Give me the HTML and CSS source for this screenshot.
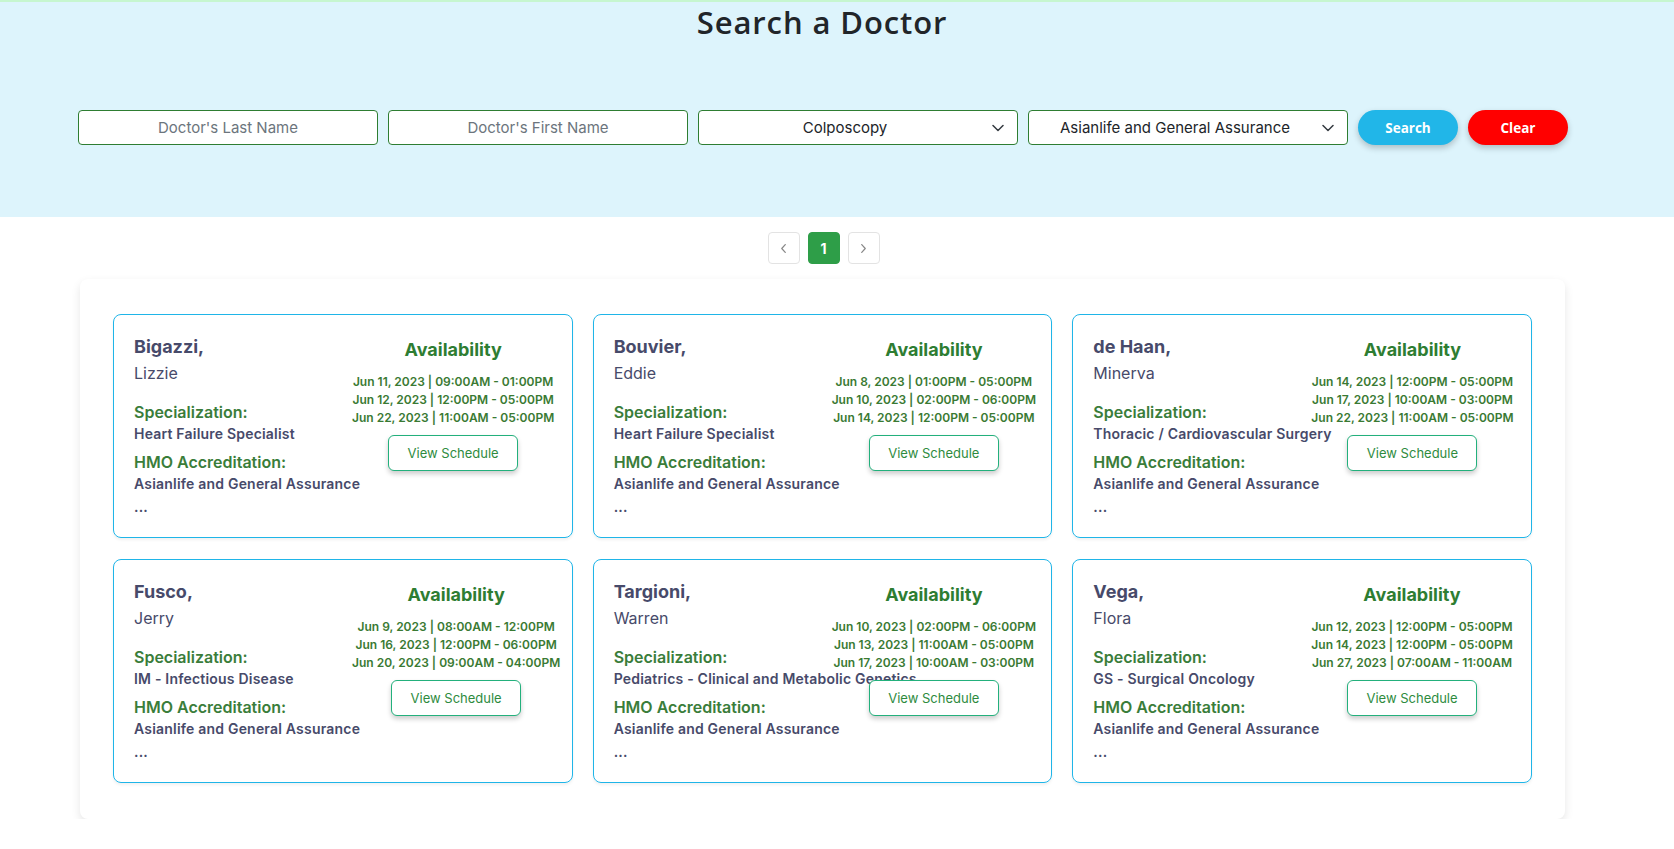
FILE: index.html
```html
<!DOCTYPE html>
<html lang="en">
<head>
<meta charset="utf-8">
<title>Search a Doctor</title>
<link rel="stylesheet" href="styles.css">
</head>
<body>
<header class="hero">
  <h1 class="hero-title">Search a Doctor</h1>
  <form class="search-row">
    <input class="field" type="text" placeholder="Doctor's Last Name">
    <input class="field" type="text" placeholder="Doctor's First Name">
    <div class="select-wrap wide">
      <select class="field select"><option>Colposcopy</option></select>
      <svg class="chev" viewBox="0 0 12 8" width="12" height="8"><path d="M1 1.5l5 5 5-5" fill="none" stroke="#343a40" stroke-width="1.5" stroke-linecap="round" stroke-linejoin="round"/></svg>
    </div>
    <div class="select-wrap wide">
      <select class="field select"><option>Asianlife and General Assurance</option></select>
      <svg class="chev" viewBox="0 0 12 8" width="12" height="8"><path d="M1 1.5l5 5 5-5" fill="none" stroke="#343a40" stroke-width="1.5" stroke-linecap="round" stroke-linejoin="round"/></svg>
    </div>
    <button type="button" class="pill pill-search">Search</button>
    <button type="button" class="pill pill-clear">Clear</button>
  </form>
</header>

<nav class="pager">
  <span class="page-btn"><svg viewBox="0 0 8 12" width="7" height="11"><path d="M6 1.5L2 6l4 4.5" fill="none" stroke="#888" stroke-width="1.4" stroke-linecap="round" stroke-linejoin="round"/></svg></span>
  <span class="page-btn active">1</span>
  <span class="page-btn"><svg viewBox="0 0 8 12" width="7" height="11"><path d="M2 1.5L6 6l-4 4.5" fill="none" stroke="#888" stroke-width="1.4" stroke-linecap="round" stroke-linejoin="round"/></svg></span>
</nav>

<main class="results">
  <div class="card">
    <div class="info">
      <div class="last">Bigazzi,</div>
      <div class="first">Lizzie</div>
      <div class="label">Specialization:</div>
      <div class="value">Heart Failure Specialist</div>
      <div class="label label2">HMO Accreditation:</div>
      <div class="value">Asianlife and General Assurance</div>
      <div class="value more">...</div>
    </div>
    <div class="avail">
      <div class="avail-title">Availability</div>
      <div class="dates">
        <div>Jun 11, 2023 | 09:00AM - 01:00PM</div>
        <div>Jun 12, 2023 | 12:00PM - 05:00PM</div>
        <div>Jun 22, 2023 | 11:00AM - 05:00PM</div>
      </div>
      <button type="button" class="view-btn">View Schedule</button>
    </div>
  </div>

  <div class="card">
    <div class="info">
      <div class="last">Bouvier,</div>
      <div class="first">Eddie</div>
      <div class="label">Specialization:</div>
      <div class="value">Heart Failure Specialist</div>
      <div class="label label2">HMO Accreditation:</div>
      <div class="value">Asianlife and General Assurance</div>
      <div class="value more">...</div>
    </div>
    <div class="avail">
      <div class="avail-title">Availability</div>
      <div class="dates">
        <div>Jun 8, 2023 | 01:00PM - 05:00PM</div>
        <div>Jun 10, 2023 | 02:00PM - 06:00PM</div>
        <div>Jun 14, 2023 | 12:00PM - 05:00PM</div>
      </div>
      <button type="button" class="view-btn">View Schedule</button>
    </div>
  </div>

  <div class="card">
    <div class="info">
      <div class="last">de Haan,</div>
      <div class="first">Minerva</div>
      <div class="label">Specialization:</div>
      <div class="value">Thoracic / Cardiovascular Surgery</div>
      <div class="label label2">HMO Accreditation:</div>
      <div class="value">Asianlife and General Assurance</div>
      <div class="value more">...</div>
    </div>
    <div class="avail">
      <div class="avail-title">Availability</div>
      <div class="dates">
        <div>Jun 14, 2023 | 12:00PM - 05:00PM</div>
        <div>Jun 17, 2023 | 10:00AM - 03:00PM</div>
        <div>Jun 22, 2023 | 11:00AM - 05:00PM</div>
      </div>
      <button type="button" class="view-btn">View Schedule</button>
    </div>
  </div>

  <div class="card">
    <div class="info">
      <div class="last">Fusco,</div>
      <div class="first">Jerry</div>
      <div class="label">Specialization:</div>
      <div class="value">IM - Infectious Disease</div>
      <div class="label label2">HMO Accreditation:</div>
      <div class="value">Asianlife and General Assurance</div>
      <div class="value more">...</div>
    </div>
    <div class="avail">
      <div class="avail-title">Availability</div>
      <div class="dates">
        <div>Jun 9, 2023 | 08:00AM - 12:00PM</div>
        <div>Jun 16, 2023 | 12:00PM - 06:00PM</div>
        <div>Jun 20, 2023 | 09:00AM - 04:00PM</div>
      </div>
      <button type="button" class="view-btn">View Schedule</button>
    </div>
  </div>

  <div class="card">
    <div class="info">
      <div class="last">Targioni,</div>
      <div class="first">Warren</div>
      <div class="label">Specialization:</div>
      <div class="value">Pediatrics - Clinical and Metabolic Genetics</div>
      <div class="label label2">HMO Accreditation:</div>
      <div class="value">Asianlife and General Assurance</div>
      <div class="value more">...</div>
    </div>
    <div class="avail">
      <div class="avail-title">Availability</div>
      <div class="dates">
        <div>Jun 10, 2023 | 02:00PM - 06:00PM</div>
        <div>Jun 13, 2023 | 11:00AM - 05:00PM</div>
        <div>Jun 17, 2023 | 10:00AM - 03:00PM</div>
      </div>
      <button type="button" class="view-btn">View Schedule</button>
    </div>
  </div>

  <div class="card">
    <div class="info">
      <div class="last">Vega,</div>
      <div class="first">Flora</div>
      <div class="label">Specialization:</div>
      <div class="value">GS - Surgical Oncology</div>
      <div class="label label2">HMO Accreditation:</div>
      <div class="value">Asianlife and General Assurance</div>
      <div class="value more">...</div>
    </div>
    <div class="avail">
      <div class="avail-title">Availability</div>
      <div class="dates">
        <div>Jun 12, 2023 | 12:00PM - 05:00PM</div>
        <div>Jun 14, 2023 | 12:00PM - 05:00PM</div>
        <div>Jun 27, 2023 | 07:00AM - 11:00AM</div>
      </div>
      <button type="button" class="view-btn">View Schedule</button>
    </div>
  </div>
</main>
</body>
</html>
```

FILE: styles.css
```css
* { box-sizing: border-box; }

html, body {
  margin: 0;
  padding: 0;
  background: #ffffff;
  font-family: Inter, "Noto Sans", sans-serif;
  color: #212529;
}

.hero {
  background: #ddf4fc;
  border-top: 2px solid #c6f6cf;
  height: 217px;
}

.hero-title {
  margin: 2px 0 0;
  height: 36px;
  line-height: 36px;
  font-family: "Open Sans", sans-serif;
  font-weight: 600;
  font-size: 31px;
  letter-spacing: 0.9px;
  text-align: center;
  color: #212529;
  padding-right: 30px;
}

.search-row {
  display: flex;
  gap: 10px;
  margin: 70px 0 0 78px;
  height: 35px;
}

.field {
  width: 300px;
  height: 35px;
  border: 1px solid #2e7d32;
  border-radius: 4px;
  background: #fff;
  font-family: Inter, sans-serif;
  font-size: 15px;
  color: #212529;
  text-align: center;
  outline: none;
  padding: 0 10px;
}

.field::placeholder { color: #6c757d; }

.select-wrap {
  position: relative;
  width: 320px;
  height: 35px;
}

.select-wrap .select {
  width: 100%;
  appearance: none;
  -webkit-appearance: none;
  text-align-last: center;
  padding: 0 36px 0 10px;
}

.chev {
  position: absolute;
  right: 14px;
  top: 14px;
  pointer-events: none;
}

.pill {
  width: 100px;
  height: 35px;
  border: none;
  border-radius: 18px;
  color: #fff;
  font-family: "Open Sans", sans-serif;
  font-weight: 700;
  font-size: 13.5px;
  box-shadow: 0 3px 6px rgba(0, 0, 0, 0.22);
  cursor: pointer;
}

.pill-search { background: #21b6e8; }
.pill-clear { background: #ff0000; }

.pager {
  display: flex;
  justify-content: center;
  gap: 8px;
  margin: 15px 0 0;
  padding-right: 27px;
}

.page-btn {
  width: 32px;
  height: 32px;
  border: 1px solid #e3e3e3;
  border-radius: 4px;
  display: flex;
  align-items: center;
  justify-content: center;
  font-size: 14px;
  font-weight: 700;
  color: #fff;
  background: #fff;
}

.page-btn.active {
  background: #2e9e48;
  border-color: #2e9e48;
}

.results {
  margin: 15px 0 0 80px;
  width: 1485px;
  background: #fff;
  border-radius: 8px;
  box-shadow: 0 4px 10px rgba(0, 0, 0, 0.1);
  padding: 35px 33px 36px;
  display: grid;
  grid-template-columns: repeat(3, minmax(0, 1fr));
  column-gap: 20px;
  row-gap: 21px;
}

.card {
  min-width: 0;
  border: 1px solid #1fb5e8;
  border-radius: 8px;
  padding: 20px 20px 20px;
  display: flex;
  box-shadow: 0 2px 3px rgba(0, 0, 0, 0.06);
}

.info {
  width: 218px;
  flex: none;
  white-space: nowrap;
  color: #474a6a;
}

.last {
  font-size: 18px;
  font-weight: 700;
  line-height: 24px;
}

.first {
  font-size: 16px;
  line-height: 28px;
}

.label {
  margin-top: 13px;
  font-size: 16px;
  font-weight: 600;
  line-height: 24px;
  color: #3a7d3a;
}

.label2 { margin-top: 6px; }

.value {
  font-size: 14px;
  font-weight: 600;
  line-height: 20px;
  letter-spacing: 0.2px;
}

.more { margin-top: 3px; }

.avail {
  display: flex;
  flex-direction: column;
  align-items: center;
  padding-top: 2px;
}

.avail-title {
  font-size: 18px;
  font-weight: 700;
  line-height: 26px;
  color: #2e7d32;
}

.dates {
  margin-top: 10px;
  text-align: center;
  font-size: 12px;
  font-weight: 600;
  line-height: 18px;
  color: #3a7a33;
  white-space: nowrap;
}

.view-btn {
  margin-top: 8px;
  width: 130px;
  height: 36px;
  border: 1px solid #23b07c;
  border-radius: 6px;
  background: #fff;
  font-family: Inter, sans-serif;
  font-size: 13px;
  color: #2e8b3e;
  box-shadow: 0 3px 5px rgba(0, 0, 0, 0.2);
  cursor: pointer;
}
```
